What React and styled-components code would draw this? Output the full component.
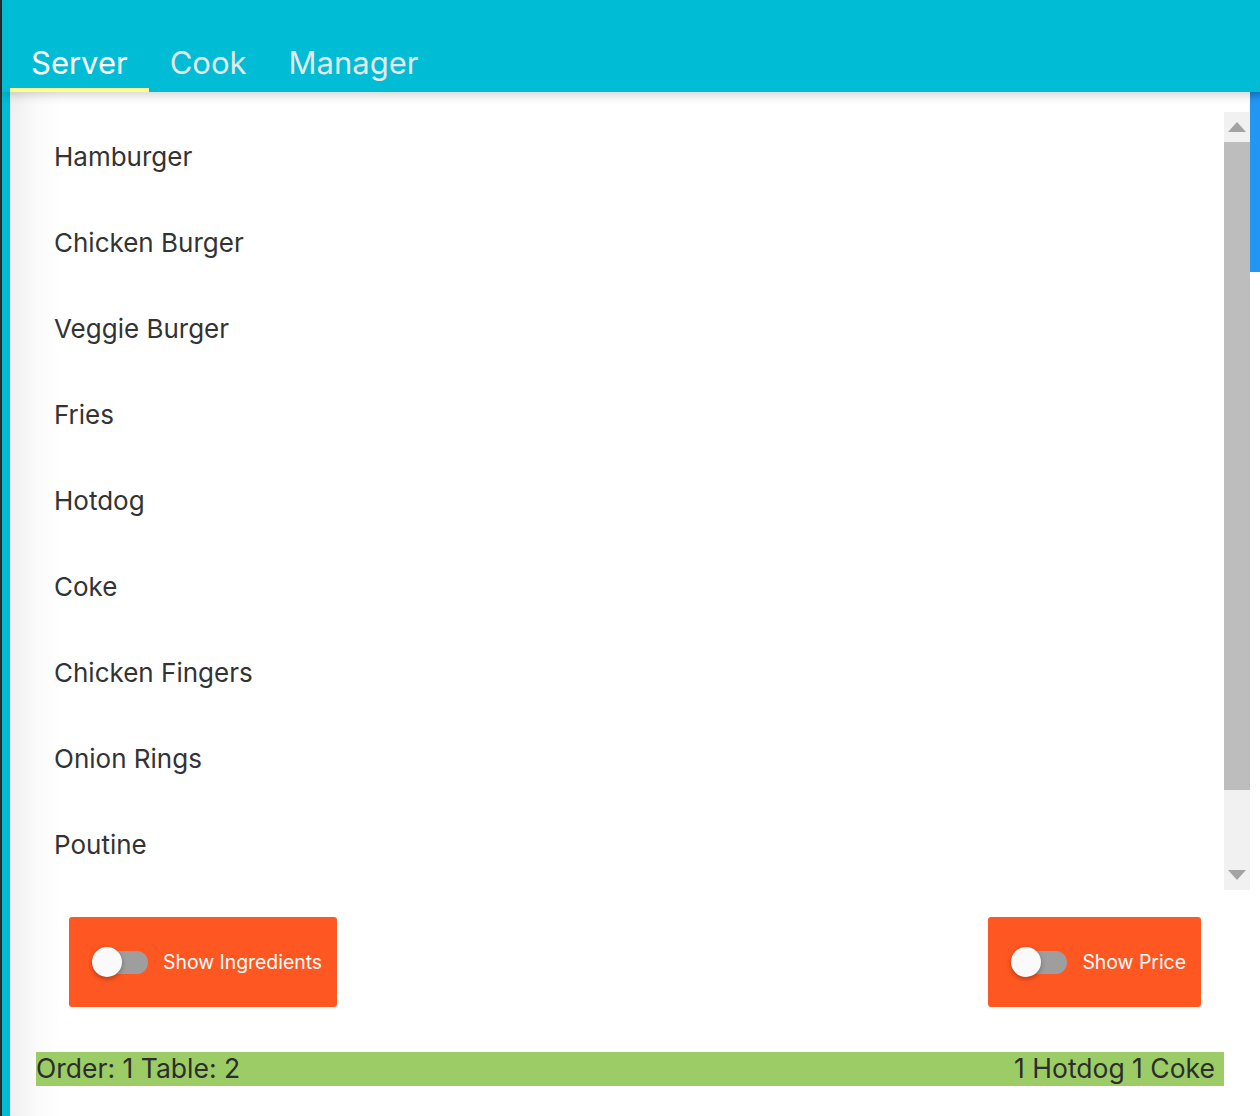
import React from "react";
import styled, { createGlobalStyle } from "styled-components";

const Global = createGlobalStyle`
  html, body { margin: 0; padding: 0; background: #fff; }
  body { font-family: Inter, "Noto Sans", Roboto, sans-serif; -webkit-font-smoothing: antialiased; }
  * { box-sizing: border-box; }
`;

const Frame = styled.div`
  display: flex;
  width: 1260px;
  height: 1116px;
  overflow: hidden;
`;

const Edge = styled.div`
  width: 2px;
  flex: none;
  background: #2c2c2c;
`;

const Shell = styled.div`
  flex: 1;
  display: flex;
  flex-direction: column;
  background: #00bcd4;
`;

const Header = styled.header`
  height: 92px;
  flex: none;
  display: flex;
  align-items: flex-end;
  padding-left: 8px;
  position: relative;
  z-index: 2;
  box-shadow: 0 3px 10px rgba(0, 0, 0, 0.18);
`;

const Tab = styled.div`
  height: 60px;
  padding: 5px 21px 0;
  display: flex;
  align-items: center;
  font-size: 31px;
  color: ${(p) => (p.$active ? "#ffffff" : "#e4e8e9")};
  border-bottom: 4px solid ${(p) => (p.$active ? "#ffff8d" : "transparent")};
`;

const Body = styled.div`
  flex: 1;
  display: flex;
  padding-left: 8px;
  min-height: 0;
`;

const Panel = styled.main`
  flex: 1;
  display: flex;
  flex-direction: column;
  padding-top: 20px;
  background: linear-gradient(to right, #efefef 0, #fafafa 25px, #ffffff 50px);
`;

const ListArea = styled.div`
  height: 778px;
  flex: none;
  display: flex;
`;

const List = styled.ul`
  flex: 1;
  margin: 0;
  padding: 1px 0 0 44px;
  list-style: none;
  overflow: hidden;
`;

const Item = styled.li`
  height: 86px;
  display: flex;
  align-items: center;
  font-size: 26px;
  color: #333;
`;

const ScrollBar = styled.div`
  width: 26px;
  flex: none;
  display: flex;
  flex-direction: column;
  background: #f1f1f1;
`;

const ScrollButton = styled.div`
  height: 30px;
  flex: none;
  display: flex;
  align-items: center;
  justify-content: center;
`;

const ScrollThumb = styled.div`
  height: 648px;
  flex: none;
  background: #bdbdbd;
`;

const ScrollTrack = styled.div`
  flex: 1;
`;

const Controls = styled.div`
  display: flex;
  justify-content: space-between;
  padding: 27px 49px 0 59px;
`;

const ToggleButton = styled.div`
  height: 90px;
  display: flex;
  align-items: center;
  gap: 15px;
  padding: 0 15px 0 23px;
  background: #ff5722;
  border-radius: 3px;
  color: #fff;
  font-size: 19.4px;
`;

const Toggle = styled.div`
  position: relative;
  width: 56px;
  height: 30px;
  flex: none;
`;

const Track = styled.div`
  position: absolute;
  left: 4px;
  right: 0;
  top: 4px;
  height: 23px;
  border-radius: 12px;
  background: #9e9e9e;
`;

const Knob = styled.div`
  position: absolute;
  left: 0;
  top: 0;
  width: 30px;
  height: 30px;
  border-radius: 50%;
  background: #fafafa;
  box-shadow: 0 2px 5px rgba(0, 0, 0, 0.3);
`;

const OrderBar = styled.div`
  margin: 45px 26px 0 26px;
  height: 34px;
  display: flex;
  align-items: center;
  justify-content: space-between;
  padding: 0 9px 2px 0;
  background: #9ccc65;
  color: #2d2d2d;
  font-size: 26.5px;
`;

const PageScroll = styled.div`
  width: 10px;
  flex: none;
  background: #fff;
`;

const PageThumb = styled.div`
  height: 180px;
  background: linear-gradient(to bottom, #1e7fd6 0, #2196f3 8px);
`;

const Arrow = ({ down }) => (
  <svg width="18" height="10" viewBox="0 0 18 10">
    <polygon
      points={down ? "0,0 18,0 9,10" : "9,0 18,10 0,10"}
      fill="#a3a3a3"
    />
  </svg>
);

const items = [
  "Hamburger",
  "Chicken Burger",
  "Veggie Burger",
  "Fries",
  "Hotdog",
  "Coke",
  "Chicken Fingers",
  "Onion Rings",
  "Poutine",
];

export default function App() {
  return (
    <>
      <Global />
      <Frame>
        <Edge />
        <Shell>
          <Header>
            <Tab $active>Server</Tab>
            <Tab>Cook</Tab>
            <Tab>Manager</Tab>
          </Header>
          <Body>
            <Panel>
              <ListArea>
                <List>
                  {items.map((it) => (
                    <Item key={it}>{it}</Item>
                  ))}
                </List>
                <ScrollBar>
                  <ScrollButton>
                    <Arrow />
                  </ScrollButton>
                  <ScrollThumb />
                  <ScrollTrack />
                  <ScrollButton>
                    <Arrow down />
                  </ScrollButton>
                </ScrollBar>
              </ListArea>
              <Controls>
                <ToggleButton>
                  <Toggle>
                    <Track />
                    <Knob />
                  </Toggle>
                  Show Ingredients
                </ToggleButton>
                <ToggleButton>
                  <Toggle>
                    <Track />
                    <Knob />
                  </Toggle>
                  Show Price
                </ToggleButton>
              </Controls>
              <OrderBar>
                <span>Order: 1 Table: 2</span>
                <span>1 Hotdog 1 Coke</span>
              </OrderBar>
            </Panel>
            <PageScroll>
              <PageThumb />
            </PageScroll>
          </Body>
        </Shell>
      </Frame>
    </>
  );
}
